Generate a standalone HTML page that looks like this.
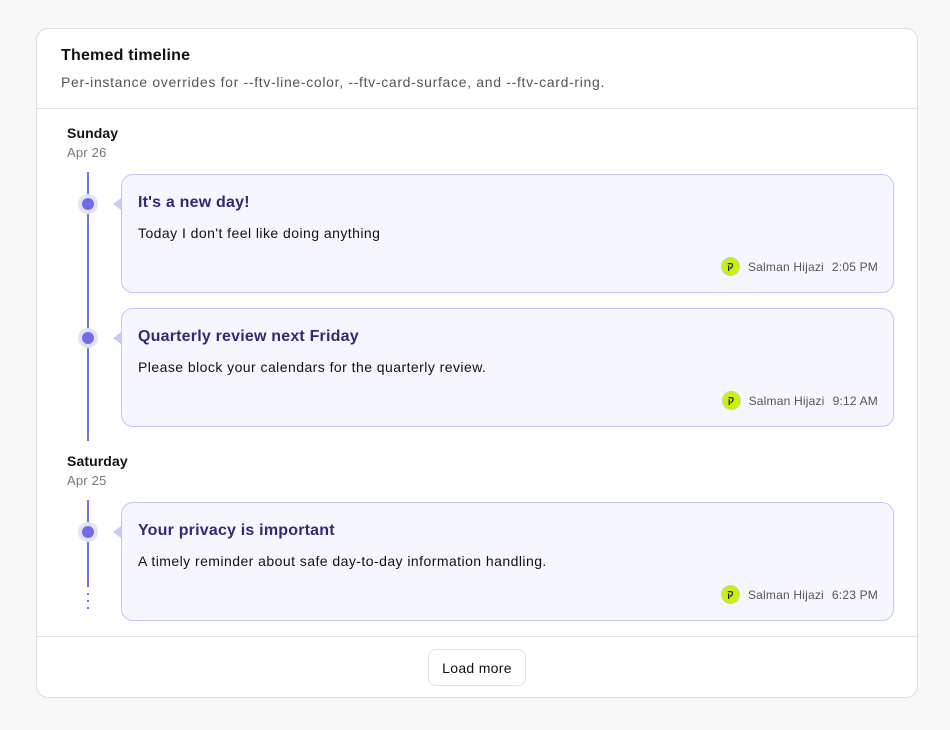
<!DOCTYPE html>
<html><head><style>
*{box-sizing:border-box;margin:0;padding:0}
body{width:950px;height:730px;background:#f8f8f8;font-family:"Liberation Sans",sans-serif;position:relative;overflow:hidden;color:#111}
.a{position:absolute}
.outer{left:36px;top:28px;width:882px;height:670px;background:#fff;border:1px solid #dedede;border-radius:12px}
.hr{height:1px;background:#e3e3e3;left:37px;width:880px}
.day{font-weight:bold;font-size:14px;color:#111;letter-spacing:0.1px}
.date{font-size:13px;color:#777;letter-spacing:0.2px}
.line{width:2px;background:#7273ea;left:87px}
.dot{width:20px;height:20px;border-radius:50%;background:#e2e2fb;left:78px}
.dot::after{content:"";position:absolute;left:4px;top:4px;width:12px;height:12px;border-radius:50%;background:#6f6de6}
.arrow{width:0;height:0;border-top:6px solid transparent;border-bottom:6px solid transparent;border-right:8px solid #c9caf8;left:113px}
.card{left:121px;width:773px;height:119px;background:#f6f7fe;border:1px solid #c4c5f7;border-radius:12px}
.card h3{position:absolute;left:16px;top:19px;font-size:16px;font-weight:bold;color:#2f2a78;letter-spacing:0.2px}
.card p{position:absolute;left:16px;top:50px;font-size:14px;color:#111;letter-spacing:0.45px}
.meta{position:absolute;right:15px;top:82px;display:flex;align-items:center;font-size:12px;color:#555;letter-spacing:0.2px}
.av{width:19px;height:19px;border-radius:50%;background:#c6f500;border:1px solid #ccc;margin-right:8px;display:flex;align-items:center;justify-content:center;font-size:10px;font-weight:bold;color:#222}
.meta .t{margin-left:8px}
</style></head><body>
<div class="a outer"></div>
<div class="a" style="left:61px;top:47px;font-size:16px;font-weight:bold;letter-spacing:0.2px">Themed timeline</div>
<div class="a" style="left:61px;top:74px;font-size:14px;color:#555;letter-spacing:0.68px">Per-instance overrides for --ftv-line-color, --ftv-card-surface, and --ftv-card-ring.</div>
<div class="a hr" style="top:108px"></div>

<div class="a day" style="left:67px;top:125px">Sunday</div>
<div class="a date" style="left:67px;top:145px">Apr 26</div>
<div class="a line" style="top:172px;height:269px"></div>

<div class="a dot" style="top:194px"></div>
<div class="a arrow" style="top:198px"></div>
<div class="a card" style="top:174px"><h3>It's a new day!</h3><p>Today I don't feel like doing anything</p><div class="meta"><div class="av">ק</div>Salman Hijazi<span class="t">2:05 PM</span></div></div>

<div class="a dot" style="top:328px"></div>
<div class="a arrow" style="top:332px"></div>
<div class="a card" style="top:308px"><h3>Quarterly review next Friday</h3><p>Please block your calendars for the quarterly review.</p><div class="meta"><div class="av">ק</div>Salman Hijazi<span class="t">9:12 AM</span></div></div>

<div class="a day" style="left:67px;top:453px">Saturday</div>
<div class="a date" style="left:67px;top:473px">Apr 25</div>
<div class="a line" style="top:500px;height:87px"></div>
<div class="a" style="left:87px;top:593px;width:2px;height:2px;background:#7273ea"></div>
<div class="a" style="left:87px;top:600px;width:2px;height:2px;background:#7273ea"></div>
<div class="a" style="left:87px;top:607px;width:2px;height:2px;background:#7273ea"></div>

<div class="a dot" style="top:522px"></div>
<div class="a arrow" style="top:526px"></div>
<div class="a card" style="top:502px"><h3>Your privacy is important</h3><p>A timely reminder about safe day-to-day information handling.</p><div class="meta"><div class="av">ק</div>Salman Hijazi<span class="t">6:23 PM</span></div></div>

<div class="a hr" style="top:636px"></div>
<div class="a" style="left:428px;top:649px;width:98px;height:37px;border:1px solid #e2e2e2;border-radius:8px;background:#fff;font-size:14px;display:flex;align-items:center;justify-content:center;color:#111;letter-spacing:0.3px">Load more</div>
</body></html>
